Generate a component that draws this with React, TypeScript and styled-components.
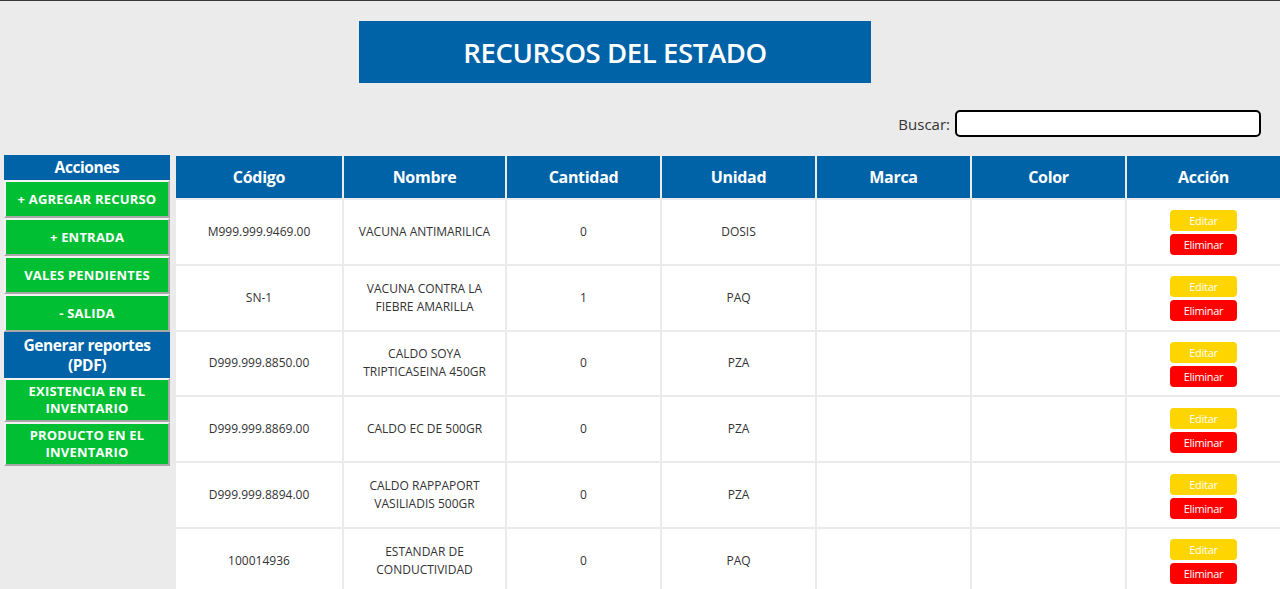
import React from "react";
import styled, { createGlobalStyle } from "styled-components";

const GlobalStyle = createGlobalStyle`
  html, body { margin: 0; padding: 0; }
  body {
    background: #ebebeb;
    font-family: "Open Sans", "Noto Sans", Arial, sans-serif;
    overflow: hidden;
  }
`;

const BLUE = "#0063a7";
const GREEN = "#00bf33";

const Page = styled.div`
  min-height: 100vh;
  border-top: 1px solid #35383b;
  background: #ebebeb;
  box-sizing: border-box;
`;

const TitleRow = styled.div`
  padding-top: 20px;
  display: flex;
`;

const TitleBox = styled.h1`
  margin: 0 0 0 359px;
  width: 512px;
  height: 62px;
  background: ${BLUE};
  color: #fff;
  font-size: 27.5px;
  font-weight: 600;
  display: flex;
  align-items: center;
  justify-content: center;
  letter-spacing: -0.4px;
`;

const SearchRow = styled.div`
  display: flex;
  justify-content: flex-end;
  align-items: center;
  margin-top: 27px;
  padding-right: 19px;
`;

const SearchLabel = styled.label`
  font-size: 15px;
  color: #333;
  margin-right: 5px;
`;

const SearchInput = styled.input`
  width: 306px;
  height: 27px;
  box-sizing: border-box;
  border: 2px solid #000;
  border-radius: 5px;
  background: #fff;
  outline: none;
`;

const Content = styled.div`
  display: flex;
  align-items: flex-start;
  margin-top: 18px;
`;

const Sidebar = styled.nav`
  margin-left: 4px;
  width: 166px;
  flex-shrink: 0;
  display: flex;
  flex-direction: column;
`;

const SideHeader = styled.div<{ $tall?: boolean }>`
  background: ${BLUE};
  color: #fff;
  font-weight: 700;
  font-size: 15.5px;
  text-align: center;
  line-height: ${(p) => (p.$tall ? "20px" : "25px")};
  padding: ${(p) => (p.$tall ? "3px 4px 3px" : "0")};
  letter-spacing: -0.4px;
`;

const SideButton = styled.button<{ $multi?: boolean }>`
  display: block;
  width: 100%;
  box-sizing: border-box;
  background: ${GREEN};
  color: #fff;
  font-family: "Open Sans", Arial, sans-serif;
  font-weight: 700;
  font-size: 13px;
  letter-spacing: 0.2px;
  text-transform: uppercase;
  border: 2px solid;
  border-color: #f2f2f2 #a8a8a8 #a8a8a8 #f2f2f2;
  padding: ${(p) => (p.$multi ? "3px 6px" : "8px 4px")};
  line-height: ${(p) => (p.$multi ? "17px" : "18px")};
  cursor: pointer;
`;

const TableWrap = styled.div`
  flex-shrink: 0;
  margin-left: 4px;
  margin-top: -1px;
`;

const Table = styled.table`
  border-collapse: separate;
  border-spacing: 2px;
  table-layout: fixed;
`;

const Th = styled.th<{ $w: number }>`
  width: ${(p) => p.$w}px;
  height: 42px;
  padding: 0;
  background: ${BLUE};
  color: #fff;
  font-size: 16px;
  font-weight: 700;
  letter-spacing: -0.3px;
  text-align: center;
`;

const Td = styled.td`
  background: #fff;
  height: 63.8px;
  padding: 0 10px;
  box-sizing: border-box;
  font-size: 12px;
  line-height: 18px;
  color: #333;
  text-align: center;
  vertical-align: middle;
`;

const ActionStack = styled.div`
  display: flex;
  flex-direction: column;
  align-items: center;
  gap: 3px;
  padding-top: 2px;
`;

const SmallButton = styled.button<{ $kind: "edit" | "delete" }>`
  width: 67px;
  height: 21px;
  border: none;
  border-radius: 4px;
  background: ${(p) => (p.$kind === "edit" ? "#ffd500" : "#ff0000")};
  color: #fff;
  font-family: "Open Sans", Arial, sans-serif;
  font-size: 11px;
  padding: 0;
  letter-spacing: -0.3px;
  cursor: pointer;
`;

const columns: { label: string; w: number }[] = [
  { label: "Código", w: 166 },
  { label: "Nombre", w: 161 },
  { label: "Cantidad", w: 153 },
  { label: "Unidad", w: 153 },
  { label: "Marca", w: 153 },
  { label: "Color", w: 153 },
  { label: "Acción", w: 153 },
];

const rows = [
  { code: "M999.999.9469.00", name: "VACUNA ANTIMARILICA", qty: "0", unit: "DOSIS" },
  { code: "SN-1", name: "VACUNA CONTRA LA FIEBRE AMARILLA", qty: "1", unit: "PAQ" },
  { code: "D999.999.8850.00", name: "CALDO SOYA TRIPTICASEINA 450GR", qty: "0", unit: "PZA" },
  { code: "D999.999.8869.00", name: "CALDO EC DE 500GR", qty: "0", unit: "PZA" },
  { code: "D999.999.8894.00", name: "CALDO RAPPAPORT VASILIADIS 500GR", qty: "0", unit: "PZA" },
  { code: "100014936", name: "ESTANDAR DE CONDUCTIVIDAD", qty: "0", unit: "PAQ" },
];

export default function App() {
  return (
    <Page>
      <GlobalStyle />
      <TitleRow>
        <TitleBox>RECURSOS DEL ESTADO</TitleBox>
      </TitleRow>
      <SearchRow>
        <SearchLabel htmlFor="buscar">Buscar:</SearchLabel>
        <SearchInput id="buscar" type="text" />
      </SearchRow>
      <Content>
        <Sidebar>
          <SideHeader>Acciones</SideHeader>
          <SideButton>+ Agregar recurso</SideButton>
          <SideButton>+ Entrada</SideButton>
          <SideButton>Vales pendientes</SideButton>
          <SideButton>- Salida</SideButton>
          <SideHeader $tall>Generar reportes (PDF)</SideHeader>
          <SideButton $multi>Existencia en el inventario</SideButton>
          <SideButton $multi>Producto en el inventario</SideButton>
        </Sidebar>
        <TableWrap>
          <Table>
            <thead>
              <tr>
                {columns.map((c) => (
                  <Th key={c.label} $w={c.w}>
                    {c.label}
                  </Th>
                ))}
              </tr>
            </thead>
            <tbody>
              {rows.map((r) => (
                <tr key={r.code}>
                  <Td>{r.code}</Td>
                  <Td>{r.name}</Td>
                  <Td>{r.qty}</Td>
                  <Td>{r.unit}</Td>
                  <Td />
                  <Td />
                  <Td>
                    <ActionStack>
                      <SmallButton $kind="edit">Editar</SmallButton>
                      <SmallButton $kind="delete">Eliminar</SmallButton>
                    </ActionStack>
                  </Td>
                </tr>
              ))}
            </tbody>
          </Table>
        </TableWrap>
      </Content>
    </Page>
  );
}
